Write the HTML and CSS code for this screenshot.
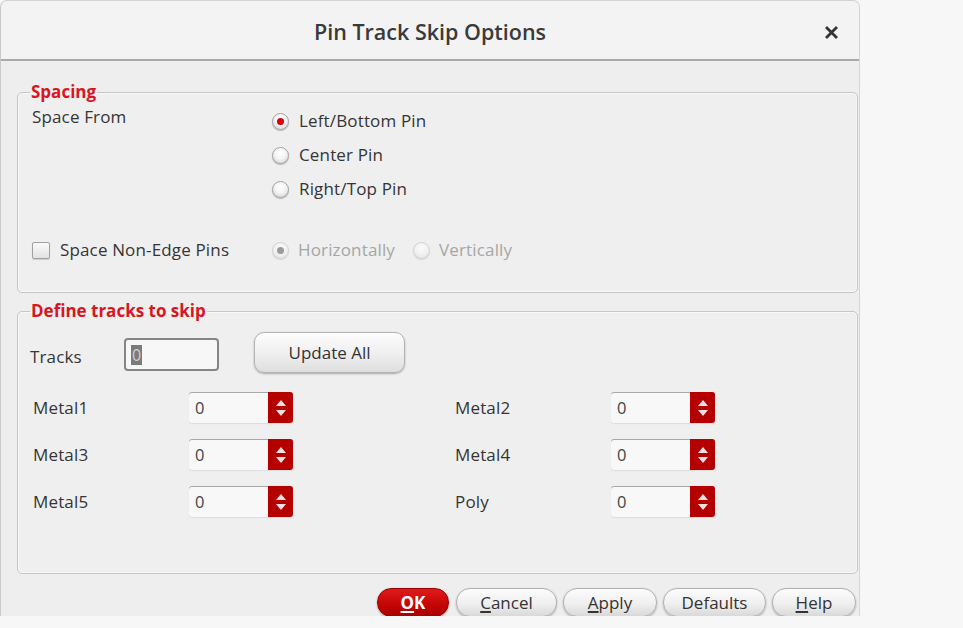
FILE: index.html
```html
<!DOCTYPE html>
<html>
<head>
<meta charset="utf-8">
<link rel="stylesheet" href="styles.css">
</head>
<body>
<div class="dialog">
  <div class="titlebar">
    <span class="title">Pin Track Skip Options</span>
    <svg class="close" width="13" height="13" viewBox="0 0 13 13"><path d="M2 2 L11 11 M11 2 L2 11" stroke="#333" stroke-width="2.8" stroke-linecap="square"/></svg>
  </div>
  <div class="content">
    <fieldset class="group group-spacing">
      <legend>Spacing</legend>
      <div class="sf-row">
        <div class="lbl sf-label">Space From</div>
        <div class="radio-list">
          <label class="radio-row"><span class="radio checked"></span><span class="lbl">Left/Bottom Pin</span></label>
          <label class="radio-row"><span class="radio"></span><span class="lbl">Center Pin</span></label>
          <label class="radio-row"><span class="radio"></span><span class="lbl">Right/Top Pin</span></label>
        </div>
      </div>
      <div class="ne-row">
        <label class="check-row"><span class="checkbox"></span><span class="lbl">Space Non-Edge Pins</span></label>
        <div class="dis-group">
          <label class="radio-row dis"><span class="radio dis checked-dis"></span><span class="lbl">Horizontally</span></label>
          <label class="radio-row dis"><span class="radio dis"></span><span class="lbl">Vertically</span></label>
        </div>
      </div>
    </fieldset>

    <fieldset class="group group-tracks">
      <legend>Define tracks to skip</legend>
      <div class="tracks-row">
        <span class="lbl tracks-label">Tracks</span>
        <span class="text-input"><span class="sel">0</span></span>
        <button class="btn update">Update All</button>
      </div>
      <div class="spin-grid">
        <span class="lbl">Metal1</span>
        <span class="spin"><span class="spin-val">0</span><span class="spin-btn"><i class="up"></i><i class="down"></i></span></span>
        <span></span>
        <span class="lbl">Metal2</span>
        <span class="spin"><span class="spin-val">0</span><span class="spin-btn"><i class="up"></i><i class="down"></i></span></span>

        <span class="lbl">Metal3</span>
        <span class="spin"><span class="spin-val">0</span><span class="spin-btn"><i class="up"></i><i class="down"></i></span></span>
        <span></span>
        <span class="lbl">Metal4</span>
        <span class="spin"><span class="spin-val">0</span><span class="spin-btn"><i class="up"></i><i class="down"></i></span></span>

        <span class="lbl">Metal5</span>
        <span class="spin"><span class="spin-val">0</span><span class="spin-btn"><i class="up"></i><i class="down"></i></span></span>
        <span></span>
        <span class="lbl">Poly</span>
        <span class="spin"><span class="spin-val">0</span><span class="spin-btn"><i class="up"></i><i class="down"></i></span></span>
      </div>
    </fieldset>

    <div class="actions">
      <button class="btn pill ok"><u>O</u>K</button>
      <button class="btn pill cancel"><u>C</u>ancel</button>
      <button class="btn pill apply"><u>A</u>pply</button>
      <button class="btn pill defaults">Defaults</button>
      <button class="btn pill help"><u>H</u>elp</button>
    </div>
  </div>
</div>
</body>
</html>
```

FILE: styles.css
```css
* { box-sizing: border-box; }

html, body {
  margin: 0;
  padding: 0;
  background: #f7f7f7;
  font-family: "Open Sans", "DejaVu Sans", sans-serif;
  color: #333333;
}

.dialog {
  width: 860px;
  height: 616px;
  background: #eeeeee;
  border-left: 1px solid #c9c9c9;
  border-right: 1px solid #d6d6d6;
  border-top: 1px solid #d2d2d2;
  border-radius: 7px 7px 0 0;
  display: flex;
  flex-direction: column;
}

.titlebar {
  height: 60px;
  flex: none;
  background: #f3f3f3;
  border-bottom: 2px solid #a9a9a9;
  border-radius: 7px 7px 0 0;
  display: flex;
  align-items: center;
  justify-content: center;
  position: relative;
}

.title {
  font-size: 21.5px;
  font-weight: 600;
  color: #3a3a3a;
  margin-top: 2px;
}

.close {
  position: absolute;
  right: 21px;
  top: 25px;
}

.content {
  flex: 1;
  padding: 20px 1px 0 16px;
  display: flex;
  flex-direction: column;
}

.lbl {
  font-size: 17px;
  line-height: 22px;
  color: #353535;
  white-space: nowrap;
  letter-spacing: 0.15px;
}

.group {
  margin: 0;
  border: 1px solid #c6c6c6;
  border-radius: 5px;
  padding: 0 14px;
  min-width: 0;
  background: #efefef;
  box-shadow: inset 0 0 0 1px #f7f7f7;
}

.group legend {
  font-size: 17px;
  font-weight: 700;
  color: #d9161e;
  line-height: 22px;
  padding: 0 1px;
  margin-left: -2px;
}

/* Spacing group */
.group-spacing { height: 212px; }

.sf-row {
  display: grid;
  grid-template-columns: 240px auto;
  margin-top: 1px;
}

.sf-label {
  line-height: 26px;
}

.radio-list {
  display: flex;
  flex-direction: column;
}

.radio-row {
  height: 34px;
  display: flex;
  align-items: center;
  gap: 10px;
}

.radio {
  width: 17px;
  height: 17px;
  border-radius: 50%;
  border: 1px solid #a2a2a2;
  background: radial-gradient(circle at 50% 35%, #ffffff 0%, #f4f4f4 45%, #d0d0d0 100%);
  box-shadow: 0 1px 1px rgba(0,0,0,0.25);
  position: relative;
  flex: none;
}

.radio.checked::after {
  content: "";
  position: absolute;
  left: 4px;
  top: 4px;
  width: 7px;
  height: 7px;
  border-radius: 50%;
  background: #d4000c;
}

.ne-row {
  display: grid;
  grid-template-columns: 240px auto;
  margin-top: 27px;
  height: 34px;
  align-items: center;
}

.check-row {
  display: flex;
  align-items: center;
  gap: 10px;
}

.checkbox {
  width: 18px;
  height: 17px;
  border: 1px solid #a0a0a0;
  border-radius: 2px;
  background: linear-gradient(#fafafa, #e2e2e2);
  box-shadow: 0 1px 1px rgba(0,0,0,0.15);
  flex: none;
}

.dis-group {
  display: flex;
  gap: 18px;
}

.radio-row.dis { gap: 9px; }
.radio-row.dis .lbl { color: #a6a6a6; }

.radio.dis {
  border-color: #d2d2d2;
  background: radial-gradient(circle at 50% 35%, #fbfbfb 0%, #f1f1f1 50%, #dddddd 100%);
  box-shadow: 0 1px 1px rgba(0,0,0,0.12);
}

.radio.checked-dis::after {
  content: "";
  position: absolute;
  left: 4px;
  top: 4px;
  width: 7px;
  height: 7px;
  border-radius: 50%;
  background: #9a9a9a;
}

/* Tracks group */
.group-tracks {
  margin-top: 7px;
  height: 274px;
  padding-left: 12px;
}

.group-tracks legend { margin-left: 0; }

.tracks-row {
  display: flex;
  align-items: center;
  margin-top: 10px;
  height: 41px;
}

.tracks-label {
  width: 94px;
  margin-top: 8px;
}

.text-input {
  width: 95px;
  height: 33px;
  border: 2px solid #858585;
  border-radius: 4px;
  background: #f7f7f7;
  display: flex;
  align-items: center;
  padding-left: 5px;
  margin-top: 4px;
}

.sel {
  background: #7b7b7b;
  color: #cfcfcf;
  font-size: 16px;
  line-height: 20px;
  padding: 0 1px;
}

.btn {
  font-family: "Open Sans", "DejaVu Sans", sans-serif;
  color: #333;
  cursor: default;
}

.update {
  margin-left: 35px;
  width: 151px;
  height: 41px;
  border: 1px solid #b3b3b3;
  border-radius: 10px;
  background: linear-gradient(#fdfdfd 0%, #f0f0f0 50%, #dedede 100%);
  box-shadow: 0 1px 2px rgba(0,0,0,0.3);
  font-size: 17px;
}

.spin-grid {
  display: grid;
  grid-template-columns: 156px 104px 162px 156px 104px;
  grid-auto-rows: 31px;
  row-gap: 16px;
  align-items: center;
  margin-top: 19px;
  padding-left: 3px;
}

.spin {
  height: 31px;
  display: flex;
  border-radius: 3px;
  box-shadow: inset 0 1px 0 #a8a8a8, 0 1px 1px rgba(0,0,0,0.08);
  background: #f8f8f8;
}

.spin-val {
  flex: 1;
  font-size: 16.5px;
  line-height: 31px;
  padding-left: 6px;
  color: #444;
}

.spin-btn {
  width: 25px;
  background: #b50000;
  border-radius: 0 3px 3px 0;
  display: flex;
  flex-direction: column;
  align-items: center;
  justify-content: center;
  gap: 4px;
}

.spin-btn i {
  display: block;
  width: 0;
  height: 0;
  border-left: 5px solid transparent;
  border-right: 5px solid transparent;
}

.spin-btn .up { border-bottom: 6px solid #f4e0e0; }
.spin-btn .down { border-top: 6px solid #f4e0e0; }

/* Bottom buttons */
.actions {
  display: flex;
  justify-content: flex-end;
  gap: 6px;
  margin-top: 14px;
  padding-right: 2px;
}

.pill {
  height: 29px;
  border: 1px solid #b0b0b0;
  border-radius: 14px;
  background: linear-gradient(#fcfcfc 0%, #efefef 55%, #d9d9d9 100%);
  box-shadow: 0 1px 2px rgba(0,0,0,0.3);
  font-size: 17px;
  line-height: 20px;
  padding: 0;
}

.pill u { text-decoration-thickness: 1.5px; text-underline-offset: 2px; }

.ok {
  width: 72px;
  margin-right: 1px;
  background: linear-gradient(#e01a1a 0%, #c60606 55%, #a80000 100%);
  border-color: #9a0000;
  color: #ffffff;
  font-weight: 700;
}

.cancel { width: 101px; }
.apply { width: 94px; }
.defaults { width: 103px; }
.help { width: 84px; }
```
